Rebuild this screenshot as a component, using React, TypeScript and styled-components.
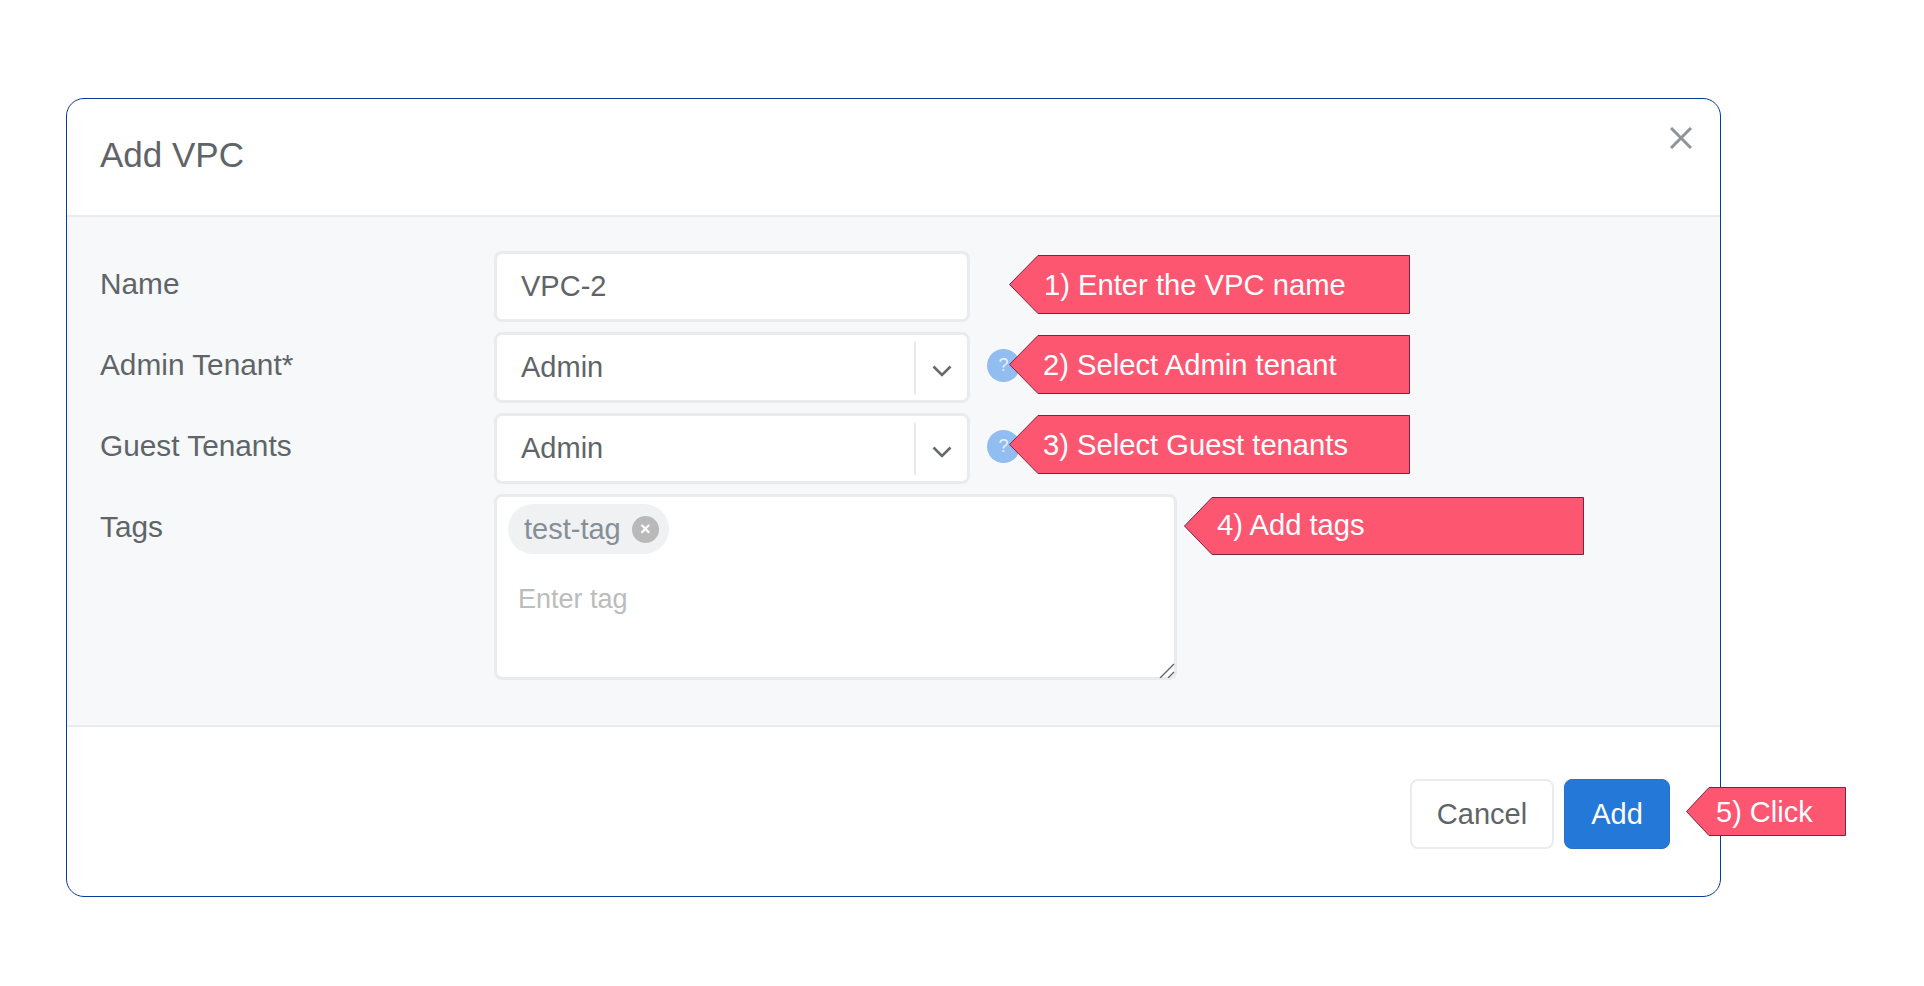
import React from 'react';
import styled, { createGlobalStyle } from 'styled-components';

const GlobalStyle = createGlobalStyle`
  html, body {
    margin: 0;
    padding: 0;
    background: #fff;
  }
  body {
    font-family: "Liberation Sans", Arial, sans-serif;
    color: #5f6468;
  }
`;

type CalloutProps = {
  x: number;
  y: number;
  width: number;
  height: number;
  tip: number;
  textLeft: number;
  textTop?: number;
  size?: number;
  children: React.ReactNode;
};

const Callout: React.FC<CalloutProps> = ({ x, y, width, height, tip, textLeft, textTop = 1, size = 29.2, children }) => {
  const points = `${width - 0.5},0.5 ${tip},0.5 0.5,${height / 2} ${tip},${height - 0.5} ${width - 0.5},${height - 0.5}`;
  return (
    <CalloutWrap $x={x} $y={y} $width={width} $height={height}>
      <CalloutShape width={width} height={height} viewBox={`0 0 ${width} ${height}`}>
        <polygon points={points} fill="#fc5671" stroke="#7d2147" strokeWidth="1" />
      </CalloutShape>
      <CalloutText $left={textLeft} $top={textTop} $size={size}>
        {children}
      </CalloutText>
    </CalloutWrap>
  );
};

const Chevron: React.FC = () => (
  <svg width="20" height="12" viewBox="0 0 20 12" fill="none">
    <path d="M1.5 1.5 L10 10 L18.5 1.5" stroke="#666a6e" strokeWidth="2.6" />
  </svg>
);

const SelectField: React.FC<{ value: string }> = ({ value }) => (
  <SelectBox>
    <SelectValue>{value}</SelectValue>
    <SelectDivider />
    <ChevronSlot>
      <Chevron />
    </ChevronSlot>
  </SelectBox>
);

const App: React.FC = () => {
  return (
    <Page>
      <GlobalStyle />
      <Modal>
        <ModalHeader>
          <Title>Add VPC</Title>
          <CloseButton aria-label="Close">
            <svg width="22" height="22" viewBox="0 0 22 22" fill="none">
              <path d="M1 1 L21 21 M21 1 L1 21" stroke="#909497" strokeWidth="3" />
            </svg>
          </CloseButton>
        </ModalHeader>
        <ModalBody>
          <FormRow>
            <Label>Name</Label>
            <TextBox>VPC-2</TextBox>
          </FormRow>
          <FormRow>
            <Label>Admin Tenant*</Label>
            <SelectField value="Admin" />
            <HelpBadge>?</HelpBadge>
          </FormRow>
          <FormRow>
            <Label>Guest Tenants</Label>
            <SelectField value="Admin" />
            <HelpBadge>?</HelpBadge>
          </FormRow>
          <FormRow>
            <Label>Tags</Label>
            <TagArea>
              <TagPill>
                test-tag
                <TagRemove>×</TagRemove>
              </TagPill>
              <TagPlaceholder>Enter tag</TagPlaceholder>
              <ResizeHandle width="16" height="16" viewBox="0 0 16 16" fill="none">
                <path d="M1 16 L15 2 M9 16 L15 10" stroke="#5f6468" strokeWidth="1.4" />
              </ResizeHandle>
            </TagArea>
          </FormRow>
        </ModalBody>
        <ModalFooter>
          <CancelButton>Cancel</CancelButton>
          <AddButton>Add</AddButton>
        </ModalFooter>
      </Modal>

      <Callout x={1009} y={255} width={401} height={59} tip={29} textLeft={35}>
        1) Enter the VPC name
      </Callout>
      <Callout x={1009} y={335} width={401} height={59} tip={29} textLeft={34}>
        2) Select Admin tenant
      </Callout>
      <Callout x={1009} y={415} width={401} height={59} tip={29} textLeft={34}>
        3) Select Guest tenants
      </Callout>
      <Callout x={1184} y={497} width={400} height={58} tip={28} textLeft={33} textTop={-1}>
        4) Add tags
      </Callout>
      <Callout x={1686} y={787} width={160} height={49} tip={23} textLeft={30} size={29}>
        5) Click
      </Callout>
    </Page>
  );
};

export default App;

const Page = styled.div`
  position: relative;
  box-sizing: border-box;
  width: 1924px;
  height: 986px;
  padding: 98px 0 0 66px;
  overflow: hidden;
`;

const Modal = styled.div`
  box-sizing: border-box;
  width: 1655px;
  height: 799px;
  display: flex;
  flex-direction: column;
  background: #fff;
  border: 1px solid #0a3a9c;
  border-radius: 18px;
  overflow: hidden;
`;

const ModalHeader = styled.div`
  display: flex;
  align-items: flex-start;
  justify-content: space-between;
  box-sizing: border-box;
  height: 118px;
  padding: 0 28px 0 33px;
  border-bottom: 2px solid #e9ebed;
`;

const Title = styled.h2`
  margin: 32px 0 0;
  font-size: 35px;
  line-height: 48px;
  font-weight: 400;
  color: #5f6468;
`;

const CloseButton = styled.button`
  display: flex;
  margin: 28px 0 0;
  padding: 0;
  border: 0;
  background: none;
`;

const ModalBody = styled.div`
  box-sizing: border-box;
  height: 510px;
  display: flex;
  flex-direction: column;
  gap: 10px;
  padding: 34px 0 0 33px;
  background: #f7f8fa;
  border-bottom: 2px solid #e9ebed;
`;

const FormRow = styled.div`
  display: flex;
  align-items: flex-start;
`;

const Label = styled.div`
  width: 394px;
  flex: none;
  padding-top: 15px;
  font-size: 29.8px;
  line-height: 36px;
  color: #5f6468;
`;

const TextBox = styled.div`
  box-sizing: border-box;
  width: 476px;
  height: 71px;
  padding: 0 24px;
  display: flex;
  align-items: center;
  font-size: 29px;
  color: #5f6468;
  background: #fff;
  border: 3px solid #e9ebed;
  border-radius: 8px;
`;

const SelectBox = styled.div`
  box-sizing: border-box;
  width: 476px;
  height: 71px;
  display: flex;
  align-items: center;
  background: #fff;
  border: 3px solid #e9ebed;
  border-radius: 8px;
`;

const SelectValue = styled.div`
  flex: 1;
  padding-left: 24px;
  font-size: 29px;
  color: #5f6468;
`;

const SelectDivider = styled.div`
  width: 2px;
  height: 52px;
  background: #e6e8ea;
`;

const ChevronSlot = styled.div`
  width: 51px;
  display: flex;
  justify-content: center;
  padding: 6px 0 0 1px;
  box-sizing: border-box;
`;

const HelpBadge = styled.div`
  width: 33px;
  height: 33px;
  margin: 17px 0 0 17px;
  display: flex;
  align-items: center;
  justify-content: center;
  border-radius: 50%;
  background: #92bdf0;
  color: #e8f1fc;
  font-size: 18px;
  font-weight: 400;
`;

const TagArea = styled.div`
  position: relative;
  box-sizing: border-box;
  width: 683px;
  height: 186px;
  padding: 7px 0 0 11px;
  background: #fff;
  border: 3px solid #e9ebed;
  border-radius: 8px;
`;

const TagPill = styled.div`
  display: inline-flex;
  align-items: center;
  gap: 11px;
  box-sizing: border-box;
  height: 50px;
  padding: 0 10px 0 16px;
  border-radius: 25px;
  background: #f0f1f3;
  color: #868e96;
  font-size: 29px;
`;

const TagRemove = styled.span`
  width: 27px;
  height: 27px;
  display: flex;
  align-items: center;
  justify-content: center;
  border-radius: 50%;
  background: #b9b9b9;
  color: #fff;
  font-size: 18px;
  font-weight: 700;
  line-height: 1;
`;

const TagPlaceholder = styled.div`
  margin: 27px 0 0 10px;
  font-size: 27px;
  line-height: 36px;
  color: #bbbcbd;
`;

const ResizeHandle = styled.svg`
  position: absolute;
  right: -1px;
  bottom: -1px;
`;

const ModalFooter = styled.div`
  flex: 1;
  display: flex;
  align-items: flex-start;
  justify-content: flex-end;
  gap: 10px;
  padding: 52px 50px 0 0;
`;

const CancelButton = styled.button`
  box-sizing: border-box;
  width: 144px;
  height: 70px;
  font-family: inherit;
  font-size: 29px;
  color: #5f6468;
  background: #fff;
  border: 2px solid #e9ebed;
  border-radius: 8px;
`;

const AddButton = styled.button`
  box-sizing: border-box;
  width: 106px;
  height: 70px;
  font-family: inherit;
  font-size: 29px;
  color: #fff;
  background: #2478d8;
  border: 1px solid #2a70c4;
  border-radius: 8px;
`;

const CalloutWrap = styled.div<{ $x: number; $y: number; $width: number; $height: number }>`
  position: absolute;
  left: ${({ $x }) => $x}px;
  top: ${({ $y }) => $y}px;
  width: ${({ $width }) => $width}px;
  height: ${({ $height }) => $height}px;
  display: flex;
  align-items: center;
`;

const CalloutShape = styled.svg`
  position: absolute;
  left: 0;
  top: 0;
`;

const CalloutText = styled.span<{ $left: number; $top: number; $size: number }>`
  position: relative;
  top: ${({ $top }) => $top}px;
  padding-left: ${({ $left }) => $left}px;
  font-size: ${({ $size }) => $size}px;
  color: #fff;
  white-space: nowrap;
`;
